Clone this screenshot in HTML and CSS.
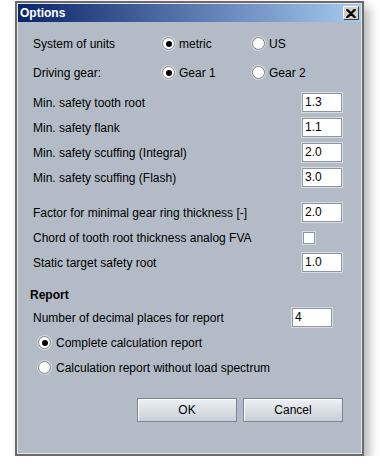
FILE: index.html
```html
<!DOCTYPE html>
<html lang="en">
<head>
  <meta charset="UTF-8">
  <title>Options</title>
  <link rel="stylesheet" href="styles.css">
</head>
<body>
  <div class="window">
    <div class="titlebar">
      <span class="title">Options</span>
      <span class="close">
        <svg width="10" height="9" viewBox="0 0 10 9"><path d="M1 1 L8 8 M8 1 L1 8 M2 1 L9 8 M9 1 L2 8" stroke="#000" stroke-width="1.6" stroke-linecap="square"/></svg>
      </span>
    </div>

    <div class="content">
      <div class="choice-row">
        <span class="label">System of units</span>
        <span class="option"><span class="radio on"></span>metric</span>
        <span class="option"><span class="radio"></span>US</span>
      </div>
      <div class="choice-row">
        <span class="label">Driving gear:</span>
        <span class="option"><span class="radio on"></span>Gear 1</span>
        <span class="option"><span class="radio"></span>Gear 2</span>
      </div>

      <div class="group first">
        <div class="row"><span class="label">Min. safety tooth root</span><span class="field">1.3</span></div>
        <div class="row"><span class="label">Min. safety flank</span><span class="field">1.1</span></div>
        <div class="row"><span class="label">Min. safety scuffing (Integral)</span><span class="field">2.0</span></div>
        <div class="row"><span class="label">Min. safety scuffing (Flash)</span><span class="field">3.0</span></div>
      </div>

      <div class="group">
        <div class="row"><span class="label">Factor for minimal gear ring thickness [-]</span><span class="field">2.0</span></div>
        <div class="row"><span class="label">Chord of tooth root thickness analog FVA</span><span class="checkbox-cell"><span class="checkbox"></span></span></div>
        <div class="row"><span class="label">Static target safety root</span><span class="field">1.0</span></div>
      </div>

      <h3 class="section">Report</h3>
      <div class="row decimals"><span class="label">Number of decimal places for report</span><span class="field">4</span></div>
      <div class="report-option"><span class="radio on"></span>Complete calculation report</div>
      <div class="report-option"><span class="radio"></span>Calculation report without load spectrum</div>

      <div class="buttons">
        <button class="btn">OK</button>
        <button class="btn">Cancel</button>
      </div>
    </div>
  </div>
</body>
</html>
```

FILE: styles.css
```css
body {
  margin: 0;
  background: #fff;
  font-family: "Liberation Sans", Arial, sans-serif;
  font-size: 12px;
  color: #000;
}
.window {
  margin: 1px 0 0 15px;
  width: 343px;
  height: 449px;
  border: 2px solid #6a6a6a;
  box-shadow: inset 0 0 0 1px #e2e4e6, 5px 6px 10px rgba(0, 0, 0, 0.3);
  background: #b3bcc6;
  padding: 1px;
  box-sizing: content-box;
}
.titlebar {
  height: 18px;
  display: flex;
  align-items: center;
  justify-content: space-between;
  background: linear-gradient(to right, #0a246a, #a6caf0);
  padding: 0 2px 0 2px;
}
.title {
  color: #fff;
  font-weight: bold;
  font-size: 12px;
}
.close {
  width: 14px;
  height: 12px;
  background: #d4d0c8;
  border: 1px solid;
  border-color: #fff #404040 #404040 #fff;
  display: flex;
  align-items: center;
  justify-content: center;
}
.content {
  padding: 7px 18px 0 15px;
}
.choice-row {
  display: grid;
  grid-template-columns: 129px 90px 1fr;
  align-items: center;
  height: 29px;
}
.option {
  display: flex;
  align-items: center;
  gap: 4px;
}
.radio {
  width: 11px;
  height: 11px;
  border-radius: 50%;
  border: 1px solid #7a8088;
  background: #fff;
  box-shadow: 0 0 0 1px #d6dade;
  display: inline-flex;
  align-items: center;
  justify-content: center;
  flex: none;
}
.radio.on::after {
  content: "";
  width: 6px;
  height: 6px;
  border-radius: 50%;
  background: #000;
}
.group {
  margin-top: 10px;
}
.group.first {
  margin-top: 3px;
}
.row {
  display: flex;
  align-items: center;
  justify-content: space-between;
  height: 25px;
}
.field {
  width: 36px;
  height: 17px;
  line-height: 17px;
  padding-left: 2px;
  background: #fff;
  border: 1px solid #8c96a0;
  box-shadow: 0 0 0 1px #d8dde2;
  margin-right: 1px;
}
.checkbox-cell {
  width: 40px;
}
.checkbox {
  display: block;
  width: 10px;
  height: 10px;
  background: #fff;
  border: 1px solid #8c96a0;
  box-shadow: 0 0 0 1px #d8dde2;
}
.section {
  margin: 10px 0 0 -3px;
  height: 20px;
  line-height: 20px;
  font-size: 12px;
  font-weight: bold;
}
.decimals {
  margin-right: 10px;
}
.report-option {
  display: flex;
  align-items: center;
  gap: 5px;
  height: 25px;
  padding-left: 5px;
}
.buttons {
  display: flex;
  justify-content: flex-end;
  gap: 6px;
  margin-top: 18px;
}
.btn {
  width: 100px;
  height: 24px;
  font-family: inherit;
  font-size: 12px;
  color: #000;
  border: 1px solid #7c8690;
  box-shadow: inset 1px 1px 0 #fff;
  background: linear-gradient(#eef1f4, #c8cfd7);
  padding: 0;
}
```
